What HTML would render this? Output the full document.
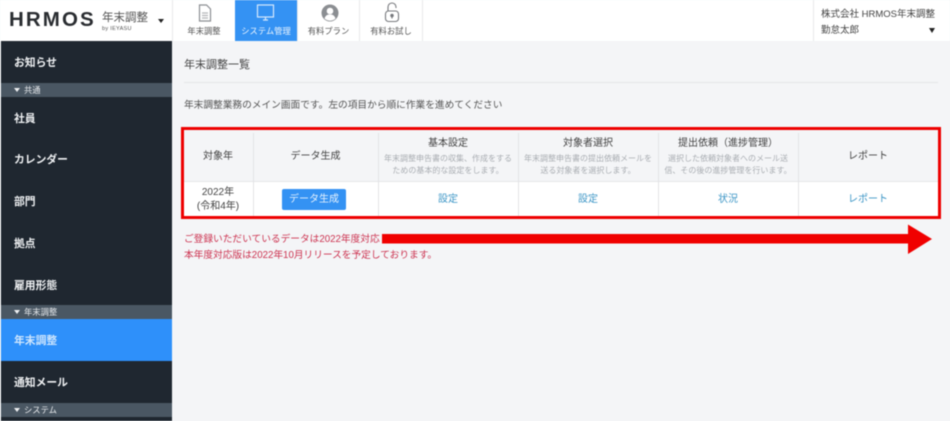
<!DOCTYPE html>
<html lang="ja">
<head>
<meta charset="utf-8">
<title>年末調整一覧</title>
<style>
*{box-sizing:border-box;margin:0;padding:0}
html,body{width:950px;height:421px;overflow:hidden;background:#f4f5f7}
body{font-family:"Liberation Sans","Noto Sans CJK JP",sans-serif;position:relative;color:#444}
#p{position:absolute;left:0;top:0;width:950px;height:421px;overflow:hidden;filter:blur(.5px)}
.a{position:absolute;white-space:nowrap}
.c{text-align:center}
#hd{left:0;top:0;width:950px;height:41px;background:#fff}
.v{position:absolute;top:0;width:1px;height:41px;background:#e8e9eb}
.nl{font-size:8.3px;line-height:12px;top:25px;color:#555;text-align:center}
.s{left:1px;width:171px;background:#1f2730}
.m{left:14px;font-size:10.8px;line-height:16px;color:#eef0f2;font-weight:700}
.b{left:1px;width:171px;height:14px;background:#4a5763}
.bt{left:13px;font-size:8.3px;line-height:14px;color:#e6e9ec}
.tri{position:absolute;width:0;height:0;border-left:3px solid transparent;border-right:3px solid transparent;border-top:4px solid #eef0f2}
.th{font-size:10px;line-height:14px;color:#444;text-align:center}
.sub{font-size:8px;line-height:12.5px;color:#a9adb2;text-align:center}
.ln{font-size:10px;line-height:14px;color:#3d96c6;text-align:center}
.red{color:#cc3350;font-size:9.7px;line-height:14px;left:184px}
</style>
</head>
<body>
<div id="p">
<div class="a" id="hd"></div>

<!-- logo -->
<div class="a" style="left:9px;top:8px;font-size:20.5px;line-height:24px;font-weight:700;letter-spacing:2.1px;color:#2a2d31">HRMOS</div>
<div class="a" style="left:102px;top:11px;font-size:11.5px;line-height:15px;color:#555">年末調整</div>
<div class="a" style="left:102px;top:26px;font-size:5.5px;line-height:7px;color:#555;letter-spacing:.3px">by IEYASU</div>
<div class="tri" style="left:158px;top:19px;border-left-width:3.5px;border-right-width:3.5px;border-top-color:#222"></div>

<div class="v" style="left:172px"></div>
<div class="v" style="left:235px"></div>
<div class="v" style="left:297px"></div>
<div class="v" style="left:359px"></div>
<div class="v" style="left:422px"></div>
<div class="v" style="left:813px"></div>
<div class="a" style="left:235px;top:0;width:62px;height:41px;background:#3492f3"></div>

<!-- nav icons -->
<svg class="a" style="left:197px;top:4px" width="16" height="18" viewBox="0 0 16 18" fill="none" stroke="#8c8f93" stroke-width="1.2"><path d="M2.5 1h7l4 4v12h-11z"/><path d="M5 9h6M5 11.500h6M5 14h6" stroke="#b4b6b9"/></svg>
<svg class="a" style="left:256px;top:4px" width="20" height="18" viewBox="0 0 20 18" fill="none" stroke="#d5e8fc" stroke-width="1.2"><rect x="1.500" y="1" width="16" height="12"/><path d="M7 16h5M9.500 13v3"/></svg>
<svg class="a" style="left:320px;top:3px" width="20" height="20" viewBox="0 0 20 20"><circle cx="10" cy="10" r="8.500" fill="#8b8e92"/><circle cx="10" cy="8" r="3.300" fill="#fff"/><path d="M4.500 15.500c1-3.200 3-4 5.500-4s4.500.8 5.500 4a8 8 0 0 1-11 0z" fill="#fff"/></svg>
<svg class="a" style="left:384px;top:2px" width="16" height="21" viewBox="0 0 16 21" fill="none" stroke="#77797d" stroke-width="1.100"><path d="M4 9V5a4 4 0 0 1 8 0v1"/><rect x="1.500" y="9" width="13" height="10.500" rx="3"/><circle cx="8" cy="13.500" r="1.200" fill="#77797d"/><path d="M8 14v2.500"/></svg>

<div class="a nl" style="left:173px;width:62px">年末調整</div>
<div class="a nl" style="left:235px;width:62px;color:#e8f3fe">システム管理</div>
<div class="a nl" style="left:298px;width:61px">有料プラン</div>
<div class="a nl" style="left:360px;width:62px">有料お試し</div>

<!-- account -->
<div class="a" style="left:821px;top:8px;font-size:9.500px;line-height:14px;color:#444">株式会社 HRMOS年末調整</div>
<div class="a" style="left:821px;top:24px;font-size:9.500px;line-height:14px;color:#444">勤怠太郎</div>
<div class="tri" style="left:929px;top:28px;border-left-width:3.500px;border-right-width:3.500px;border-top:5px solid #222"></div>

<!-- sidebar -->
<div class="a s" style="top:41px;height:380px"></div>
<div class="a m" style="top:55px">お知らせ</div>
<div class="a b" style="top:83px"></div>
<div class="tri" style="left:14px;top:88px"></div>
<div class="a bt" style="left:24px;top:83px">共通</div>
<div class="a m" style="top:111px">社員</div>
<div class="a m" style="top:152px">カレンダー</div>
<div class="a m" style="top:194px">部門</div>
<div class="a m" style="top:236px">拠点</div>
<div class="a m" style="top:278px">雇用形態</div>
<div class="a b" style="top:305px"></div>
<div class="tri" style="left:14px;top:310px"></div>
<div class="a bt" style="left:24px;top:305px">年末調整</div>
<div class="a" style="left:1px;top:319px;width:171px;height:42px;background:#2e90fa"></div>
<div class="a m" style="top:333px;color:#cfe6fd">年末調整</div>
<div class="a m" style="top:375px">通知メール</div>
<div class="a b" style="top:403px"></div>
<div class="tri" style="left:14px;top:408px"></div>
<div class="a bt" style="left:24px;top:403px">システム</div>

<!-- main -->
<div class="a" style="left:184px;top:58px;font-size:11px;line-height:15px;color:#444">年末調整一覧</div>
<div class="a" style="left:184px;top:82px;width:754px;height:1px;background:#e5e6e8"></div>
<div class="a" style="left:184px;top:99px;font-size:9.700px;line-height:14px;color:#555">年末調整業務のメイン画面です。左の項目から順に作業を進めてください</div>

<!-- table -->
<div class="a" style="left:183px;top:130px;width:756px;height:51px;background:#f4f5f7"></div>
<div class="a" style="left:183px;top:181px;width:756px;height:37px;background:#fff"></div>
<div class="a" style="left:183px;top:181px;width:756px;height:1px;background:#e6e7e9"></div>
<div class="a" style="left:253px;top:133px;width:1px;height:85px;background:#e3e4e6"></div>
<div class="a" style="left:378px;top:133px;width:1px;height:85px;background:#e3e4e6"></div>
<div class="a" style="left:518px;top:133px;width:1px;height:85px;background:#e3e4e6"></div>
<div class="a" style="left:658px;top:133px;width:1px;height:85px;background:#e3e4e6"></div>
<div class="a" style="left:798px;top:133px;width:1px;height:85px;background:#e3e4e6"></div>

<div class="a th" style="left:183px;top:150px;width:70px">対象年</div>
<div class="a th" style="left:253px;top:150px;width:125px">データ生成</div>
<div class="a th" style="left:378px;top:137px;width:140px">基本設定</div>
<div class="a sub" style="left:378px;top:152.500px;width:140px">年末調整申告書の収集、作成をする<br>ための基本的な設定をします。</div>
<div class="a th" style="left:518px;top:137px;width:140px">対象者選択</div>
<div class="a sub" style="left:518px;top:152.500px;width:140px">年末調整申告書の提出依頼メールを<br>送る対象者を選択します。</div>
<div class="a th" style="left:658px;top:137px;width:140px">提出依頼（進捗管理）</div>
<div class="a sub" style="left:658px;top:152.500px;width:140px">選択した依頼対象者へのメール送<br>信、その後の進捗管理を行います。</div>
<div class="a th" style="left:798px;top:150px;width:140px">レポート</div>

<div class="a c" style="left:183px;top:186px;width:70px;font-size:10px;line-height:13.500px;color:#444">2022年<br>(令和4年)</div>
<div class="a c" style="left:282px;top:189px;width:64px;height:21px;background:#3492f3;border-radius:2px;color:#e6f2fe;font-size:10px;line-height:21px">データ生成</div>
<div class="a ln" style="left:378px;top:193px;width:140px">設定</div>
<div class="a ln" style="left:518px;top:193px;width:140px">設定</div>
<div class="a ln" style="left:658px;top:193px;width:140px">状況</div>
<div class="a ln" style="left:798px;top:193px;width:140px">レポート</div>

<!-- red frame -->
<div class="a" style="left:181px;top:127px;width:760px;height:92px;border:3px solid #ee0000"></div>

<!-- notes -->
<div class="a red" style="top:233px">ご登録いただいているデータは2022年度対応</div>
<div class="a red" style="top:249px">本年度対応版は2022年10月リリースを予定しております。</div>

<!-- arrow -->
<svg class="a" style="left:380px;top:222px" width="556" height="34" viewBox="0 0 556 34"><path d="M2 12h526V2.500L552 17 528 32V21.500H2z" fill="#f00000"/></svg>
</div>
</body>
</html>
